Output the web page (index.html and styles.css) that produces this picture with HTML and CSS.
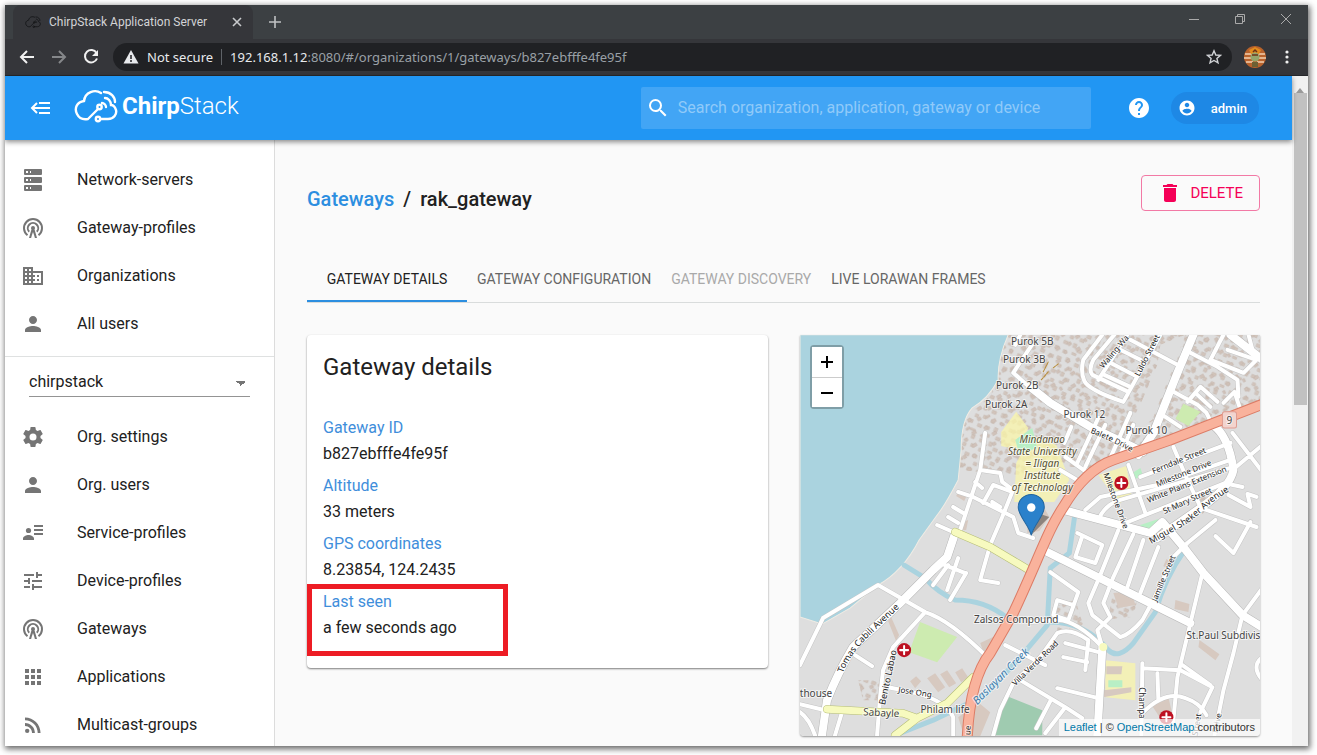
FILE: index.html
```html
<!DOCTYPE html>
<html lang="en">
<head>
<meta charset="utf-8">
<title>ChirpStack Application Server</title>
<link rel="stylesheet" href="styles.css">
</head>
<body>
<svg class="sprite" aria-hidden="true">
  <symbol id="i-cloud" viewBox="0 0 44 34"><g fill="none" stroke="currentColor" stroke-width="2.4" stroke-linecap="round"><path d="M27 4C21 0 11 3 10 12C3 13 0 19 3 25C5 29 9 31 14 30L24 20"/><circle cx="25.500" cy="18" r="2.200"/><circle cx="24" cy="30" r="2.200"/><path d="M26.500 30H34C40 30 43 25 42 21C41 18 39 16 37 16C37 12 34 9 31 9M28 14C30 14 32 16 32 18M30 3C37 3 41 8 41 13"/></g></symbol>
  <symbol id="i-server" viewBox="0 0 24 24"><path fill-rule="evenodd" d="M4 1H20A1 1 0 0 1 21 2V6A1 1 0 0 1 20 7H4A1 1 0 0 1 3 6V2A1 1 0 0 1 4 1M4 9H20A1 1 0 0 1 21 10V14A1 1 0 0 1 20 15H4A1 1 0 0 1 3 14V10A1 1 0 0 1 4 9M4 17H20A1 1 0 0 1 21 18V22A1 1 0 0 1 20 23H4A1 1 0 0 1 3 22V18A1 1 0 0 1 4 17M9 5H10V3H9V5M9 13H10V11H9V13M9 21H10V19H9V21M5 3V5H7V3H5M5 11V13H7V11H5M5 19V21H7V19H5Z"/></symbol>
  <symbol id="i-radio" viewBox="0 0 24 24"><path d="M12 10a2 2 0 0 0-2 2c0 .5.200 1 .5 1.300L8 22h2.100l.7-2.500L12 16l1.200 3.500.7 2.500H16l-2.500-8.700c.3-.3.5-.8.5-1.300a2 2 0 0 0-2-2z"/><g fill="none" stroke="currentColor" stroke-width="2"><path d="M6.500 19.200A9 9 0 1 1 17.500 19.200M8.200 15.800A5.200 5.200 0 1 1 15.800 15.800"/></g></symbol>
  <symbol id="i-building" viewBox="0 0 24 24"><path d="M12 7V3H2v18h20V7H12zM6 19H4v-2h2v2zm0-4H4v-2h2v2zm0-4H4V9h2v2zm0-4H4V5h2v2zm4 12H8v-2h2v2zm0-4H8v-2h2v2zm0-4H8V9h2v2zm0-4H8V5h2v2zm10 12h-8v-2h2v-2h-2v-2h2v-2h-2V9h8v10zm-2-8h-2v2h2v-2zm0 4h-2v2h2v-2z"/></symbol>
  <symbol id="i-person" viewBox="0 0 24 24"><path d="M12 12c2.210 0 4-1.790 4-4s-1.790-4-4-4-4 1.790-4 4 1.790 4 4 4zm0 2c-2.670 0-8 1.340-8 4v2h16v-2c0-2.660-5.330-4-8-4z"/></symbol>
  <symbol id="i-gear" viewBox="0 0 24 24"><path d="M12 15.500A3.500 3.500 0 0 1 8.500 12 3.500 3.500 0 0 1 12 8.500a3.500 3.500 0 0 1 3.500 3.500 3.500 3.500 0 0 1-3.500 3.500m7.430-2.530c.04-.32.07-.64.07-.97s-.03-.66-.07-1l2.110-1.630c.19-.15.24-.42.120-.64l-2-3.460c-.12-.22-.39-.31-.61-.22l-2.490 1c-.52-.39-1.060-.73-1.690-.98l-.37-2.650A.506.506 0 0 0 14 2h-4c-.25 0-.46.18-.5.420l-.37 2.650c-.63.250-1.170.590-1.690.980l-2.490-1c-.22-.09-.49 0-.61.220l-2 3.460c-.13.220-.07.490.120.640L4.570 11c-.04.340-.07.670-.07 1s.03.650.070.970l-2.110 1.660c-.19.150-.25.420-.12.640l2 3.460c.12.220.390.300.610.220l2.490-1.010c.52.400 1.060.740 1.690.990l.37 2.650c.04.240.250.420.5.420h4c.25 0 .46-.18.5-.42l.37-2.650c.63-.26 1.170-.59 1.690-.99l2.490 1.010c.22.080.490 0 .610-.22l2-3.460c.12-.22.07-.49-.12-.64l-2.110-1.660z"/></symbol>
  <symbol id="i-detail" viewBox="0 0 24 24"><circle cx="7.500" cy="9.500" r="2.600"/><path d="M2 19v-1.500c0-2.300 3.500-3.500 5.500-3.500s5.500 1.200 5.500 3.500V19zM13 4h9v2h-9zM13 8h9v2h-9zM13 12h9v2h-9z"/></symbol>
  <symbol id="i-tune" viewBox="0 0 24 24"><path d="M3 17v2h6v-2H3zM3 5v2h10V5H3zm10 16v-2h8v-2h-8v-2h-2v6h2zM7 9v2H3v2h4v2h2V9H7zm14 4v-2H11v2h10zm-6-4h2V7h4V5h-4V3h-2v6z"/></symbol>
  <symbol id="i-apps" viewBox="0 0 24 24"><path d="M4 8h4V4H4v4zm6 12h4v-4h-4v4zm-6 0h4v-4H4v4zm0-6h4v-4H4v4zm6 0h4v-4h-4v4zm6-10v4h4V4h-4zm-6 4h4V4h-4v4zm6 6h4v-4h-4v4zm0 6h4v-4h-4v4z"/></symbol>
  <symbol id="i-rss" viewBox="0 0 24 24"><circle cx="6.180" cy="17.820" r="2.180"/><path d="M4 4.440v2.830c7.030 0 12.730 5.700 12.730 12.730h2.830C19.560 11.410 12.590 4.440 4 4.440zm0 5.660v2.830c3.900 0 7.070 3.170 7.070 7.070h2.830c0-5.470-4.430-9.900-9.900-9.900z"/></symbol>
</svg>

<div class="window">
  <div class="tabstrip">
    <div class="browser-tab">
      <svg class="favicon"><use href="#i-cloud"/></svg>
      <span class="tab-title">ChirpStack Application Server</span>
      <button class="chrome-btn" aria-label="Close tab"><svg width="16" height="16" viewBox="0 0 16 16"><path d="M4 4l8 8M12 4l-8 8" stroke="#c8cacc" stroke-width="1.600"/></svg></button>
    </div>
    <button class="chrome-btn new-tab" aria-label="New tab"><svg width="16" height="16" viewBox="0 0 16 16"><path d="M2 8h12M8 2v12" stroke="#bfc1c3" stroke-width="1.600"/></svg></button>
    <div class="win-controls">
      <button class="chrome-btn" aria-label="Minimize"><svg width="12" height="12" viewBox="0 0 12 12"><path d="M1 6.500h10" stroke="#aaa"/></svg></button>
      <button class="chrome-btn" aria-label="Restore"><svg width="12" height="12" viewBox="0 0 12 12"><path d="M1.500 3.500h7v7h-7zM3.500 3.500v-2h7v7h-2" fill="none" stroke="#aaa"/></svg></button>
      <button class="chrome-btn" aria-label="Close window"><svg width="12" height="12" viewBox="0 0 12 12"><path d="M1 1l10 10M11 1L1 11" stroke="#aaa"/></svg></button>
    </div>
  </div>

  <div class="toolbar">
    <button class="chrome-btn" aria-label="Back"><svg width="20" height="20" viewBox="0 0 20 20"><path d="M17 10H4M10 4l-6 6 6 6" fill="none" stroke="#f1f1f1" stroke-width="2"/></svg></button>
    <button class="chrome-btn" aria-label="Forward"><svg width="20" height="20" viewBox="0 0 20 20"><path d="M3 10h13M10 4l6 6-6 6" fill="none" stroke="#85878a" stroke-width="2"/></svg></button>
    <button class="chrome-btn" aria-label="Reload"><svg width="20" height="20" viewBox="0 0 20 20"><path d="M15.500 6A6.200 6.200 0 1 0 16 11.500" fill="none" stroke="#f1f1f1" stroke-width="2"/><path d="M17 3v6h-6z" fill="#f1f1f1"/></svg></button>
    <div class="omnibox">
      <svg width="16" height="16" viewBox="0 0 16 16"><path d="M8 1l7.500 13.500H.5z" fill="#e8eaed"/><path d="M8 6v4M8 11v2" stroke="#202124" stroke-width="1.500"/></svg>
      <span class="secure">Not secure</span>
      <span class="url"><b>192.168.1.12</b>:8080/#/organizations/1/gateways/b827ebfffe4fe95f</span>
      <svg width="16" height="16" viewBox="0 0 16 16"><path d="M8 1.800l1.800 4.200 4.600.4-3.500 3 1.100 4.500L8 11.500l-4 2.400 1.100-4.500-3.500-3 4.600-.4z" fill="none" stroke="#d0d2d5" stroke-width="1.400"/></svg>
    </div>
    <svg class="avatar" viewBox="0 0 22 22"><circle cx="11" cy="11" r="11" fill="#b8622c"/><path d="M1 8h7M0 12h8M2 16h7M14 8h7M14 12h8M13 16h7" stroke="#f2cfae" stroke-width="1.600"/><path d="M5 4l6-3 6 3-2 4H7z" fill="#e38b1d"/><circle cx="11" cy="11" r="4.500" fill="#95a56b"/><path d="M8 9h6M9 6l2-2 2 2" stroke="#6b321a" stroke-width="1.500" fill="none"/><path d="M8 16h6v5H8z" fill="#6d6033"/></svg>
    <button class="chrome-btn" aria-label="Menu"><svg width="6" height="16" viewBox="0 0 6 16" fill="#f1f1f1"><circle cx="3" cy="3" r="1.600"/><circle cx="3" cy="8" r="1.600"/><circle cx="3" cy="13" r="1.600"/></svg></button>
  </div>

  <div class="viewport">
    <div class="app">
      <header class="appbar">
        <button class="bare" aria-label="Toggle menu"><svg width="22" height="16" viewBox="0 0 22 16"><path d="M10 3h11M3 8h18M10 13h11M8 3L3 8l5 5" fill="none" stroke="#fff" stroke-width="2"/></svg></button>
        <a class="logo" href="#/" aria-label="ChirpStack"><svg width="44" height="34"><use href="#i-cloud"/></svg><span><b>Chirp</b>Stack</span></a>
        <label class="search">
          <svg width="24" height="24" viewBox="0 0 24 24"><path fill="#fff" d="M15.500 14h-.79l-.28-.27A6.471 6.471 0 0 0 16 9.500 6.500 6.500 0 1 0 9.500 16c1.610 0 3.090-.59 4.230-1.570l.27.280v.790l5 4.990L20.490 19l-4.990-5zm-6 0C7.010 14 5 11.990 5 9.500S7.010 5 9.500 5 14 7.010 14 9.500 11.990 14 9.500 14z"/></svg>
          <input type="text" aria-label="Search" placeholder="Search organization, application, gateway or device">
        </label>
        <a class="help" href="#/help" aria-label="Help"><svg width="24" height="24" viewBox="0 0 24 24"><path fill="#fff" d="M12 2C6.480 2 2 6.480 2 12s4.480 10 10 10 10-4.480 10-10S17.520 2 12 2zm1 17h-2v-2h2v2zm2.070-7.750l-.9.920C13.450 12.900 13 13.500 13 15h-2v-.5c0-1.100.450-2.100 1.170-2.830l1.240-1.260c.37-.36.590-.86.590-1.410 0-1.100-.9-2-2-2s-2 .9-2 2H8c0-2.210 1.790-4 4-4s4 1.790 4 4c0 .88-.36 1.680-.93 2.250z"/></svg></a>
        <button class="user"><svg width="18" height="18" viewBox="0 0 24 24"><path fill="#fff" d="M12 2C6.480 2 2 6.480 2 12s4.480 10 10 10 10-4.480 10-10S17.520 2 12 2zm0 3c1.660 0 3 1.340 3 3s-1.340 3-3 3-3-1.340-3-3 1.340-3 3-3zm0 14.200c-2.500 0-4.710-1.280-6-3.220.03-1.990 4-3.080 6-3.080 1.990 0 5.970 1.090 6 3.080-1.290 1.940-3.500 3.220-6 3.220z"/></svg>admin</button>
      </header>

      <div class="body">
        <nav class="sidebar">
          <div class="nav-group top">
            <a href="#/network-servers"><svg><use href="#i-server"/></svg>Network-servers</a>
            <a href="#/gateway-profiles"><svg><use href="#i-radio"/></svg>Gateway-profiles</a>
            <a href="#/organizations"><svg><use href="#i-building"/></svg>Organizations</a>
            <a href="#/users"><svg><use href="#i-person"/></svg>All users</a>
          </div>
          <div class="org"><select aria-label="Organization"><option>chirpstack</option></select></div>
          <div class="nav-group">
            <a href="#/settings"><svg><use href="#i-gear"/></svg>Org. settings</a>
            <a href="#/org-users"><svg><use href="#i-person"/></svg>Org. users</a>
            <a href="#/service-profiles"><svg><use href="#i-detail"/></svg>Service-profiles</a>
            <a href="#/device-profiles"><svg><use href="#i-tune"/></svg>Device-profiles</a>
            <a href="#/gateways"><svg><use href="#i-radio"/></svg>Gateways</a>
            <a href="#/applications"><svg><use href="#i-apps"/></svg>Applications</a>
            <a href="#/multicast-groups"><svg><use href="#i-rss"/></svg>Multicast-groups</a>
          </div>
        </nav>

        <main>
          <div class="title-row">
            <h1><a href="#/gateways">Gateways</a><span>/</span>rak_gateway</h1>
            <button class="delete"><svg width="24" height="24" viewBox="0 0 24 24"><path fill="currentColor" d="M6 19c0 1.100.9 2 2 2h8c1.100 0 2-.9 2-2V7H6v12zM19 4h-3.500l-1-1h-5l-1 1H5v2h14V4z"/></svg>DELETE</button>
          </div>
          <div class="tabs" role="tablist">
            <button role="tab" aria-selected="true" class="active">GATEWAY DETAILS</button>
            <button role="tab">GATEWAY CONFIGURATION</button>
            <button role="tab" disabled>GATEWAY DISCOVERY</button>
            <button role="tab">LIVE LORAWAN FRAMES</button>
          </div>
          <div class="grid">
            <section class="card">
              <h2>Gateway details</h2>
              <dl>
                <div><dt>Gateway ID</dt><dd>b827ebfffe4fe95f</dd></div>
                <div><dt>Altitude</dt><dd>33 meters</dd></div>
                <div><dt>GPS coordinates</dt><dd>8.23854, 124.2435</dd></div>
                <div class="marked"><dt>Last seen</dt><dd>a few seconds ago</dd></div>
              </dl>
            </section>
            <section class="map">
              <svg class="tiles" viewBox="800 335 460 401" preserveAspectRatio="xMidYMid slice">
                <defs>
                  <pattern id="houses" width="37" height="31" patternUnits="userSpaceOnUse" patternTransform="rotate(24)"><path d="M1 2h4v3H1zM11 1h3v4h-3zM17 5h4v3h-4zM29 1h3v4h-3zM4 11h3v3H4zM13 10h4v2h-4zM24 12h3v3h-3zM32 10h3v3h-3zM1 19h4v3H1zM10 17h3v4h-3zM20 19h4v3h-4zM30 20h4v3h-4zM5 26h3v3H5zM15 25h4v3h-4zM25 27h5v2h-5z" fill="#d2c5bc" stroke="#c3b3a9" stroke-width=".5"/></pattern>
                  <pattern id="sheds" width="23" height="29" patternUnits="userSpaceOnUse" patternTransform="rotate(-31)"><path d="M2 3h3v3H2zM12 1h4v3h-4zM18 8h2v3h-2zM6 12h4v3H6zM15 17h3v3h-3zM1 21h3v3H1zM9 24h4v2H9z" fill="#d0c2b9" stroke="#c0b0a6" stroke-width=".5"/></pattern>
                  <path id="built" d="M1006 335h254v72l-110 42-50 20-62-5-17 11-63-5 5-50 28-25zM1050 608l25-8 8 25-25 8zM1113 590l25 5-5 22-25 2zM858 680h25v20h-20zM1196 500l12-8 6 10-12 12z"/>
                  <g id="minor">
                    <path d="M985 433L980 470L960 530L955 533M980 470L1000 473L1002 482L1010 488M958 492L973 497L1013 517L1018 533L1033 538M975 482L982 488M983 503L993 485L1012 492L1002 517L990 545L980 580L998 583M992 502L1000 507M953 507L963 513M948 517L958 523M937 525L953 532"/>
                    <path d="M1033 343L1013 373L1040 397M1020 335L1015 345M1102 335L1083 360Q1080 372 1084 381T1123 402L1160 335M1114 335L1093 360Q1088 370 1092 375L1128 392M1127 335L1098 380M1130 340L1177 365M1120 350L1140 360M1110 363L1135 376M1104 375L1130 387"/>
                    <path d="M1190 353L1217 367L1237 380L1238 397M1173 392L1197 405L1206 413L1212 425M1187 402L1200 387L1217 402M1195 393L1210 407M1162 415L1180 427M1223 335L1210 360L1243 373L1256 360L1227 350M1248 335L1252 350M1223 403L1234 392L1240 410"/>
                    <path d="M1077 463L1098 418M1085 467L1105 425M1110 458L1130 413M1064 443L1071 427M1120 455L1133 425M1065 457L1090 475M1060 470L1082 483"/>
                    <path d="M1128 465L1145 513M1173 447L1187 480L1200 507M1140 477L1230 443M1085 510L1100 497L1157 485L1230 460M1098 520Q1104 505 1120 500L1230 468M1120 525L1150 513L1230 481M1232 433L1262 472M1262 445L1232 470M1228 495L1250 507L1247 494L1256 497M1200 508L1256 527M1228 484L1242 487"/>
                    <path d="M1118 530L1100 575L1088 603L1092 615L1120 637Q1130 634 1142 620L1153 600L1173 557L1187 543L1215 520M1133 534L1113 577L1103 603L1110 617L1097 630L1102 647M1143 540L1127 587M1158 547L1140 593M1050 572L1078 592L1068 620L1053 615L1057 600L1073 605M1077 533L1102 545L1095 563L1075 557L1082 536M1215 536L1233 553L1250 522"/>
                    <path d="M1202 573L1190 623L1177 677L1172 730M1242 615L1233 653L1223 690L1214 735M1262 588L1242 615M1030 622L1058 620Q1077 621 1102 647M993 735L1000 710L1013 683L1040 657L1057 633Q1070 627 1088 640L1085 670M1065 643L1102 653M1063 657L1087 662M1057 688L1098 698M1020 680L1065 707L1082 718M1045 733L1065 707M1036 728L1051 699"/>
                    <path d="M1142 663L1141 735M1142 668L1180 670L1212 687L1200 712M1157 673L1158 700M1143 712Q1165 690 1185 698Q1200 703 1206 715M1262 657Q1250 666 1262 680M1182 665L1210 685"/>
                    <path d="M800 665L823 618L878 585L925 612Q950 620 987 657M925 612L893 647L883 670L880 697L877 735M888 687L917 693Q947 702 953 717V735M800 704L825 710M815 735Q809 718 800 712M855 655L872 666M842 712L835 735M958 558L947 590M933 585L948 565M966 573L950 600M940 563L965 573M1005 645L1045 665"/>
                  </g>
                  <g id="main"><path d="M1030 387L1050 403L1090 427L1143 452M1193 335L1177 373L1153 433L1138 455M1230 335L1262 360M1212 425Q1228 435 1233 470Q1230 487 1200 508L1157 538M1047 552L1190 623M1063 510L1150 533L1162 522L1183 547L1203 573L1242 615L1263 628M1102 647L1097 735M955 533L947 557L933 570L900 603L853 647Q838 672 827 700L822 735"/></g>
                  <path id="highway" d="M1263 404L1170 440L1113 460Q1085 470 1063 507C1047 531 1038 560 1013 613L990 653Q970 678 967 738"/>
                  <path id="yellow" d="M955 532L990 547L1017 563L1032 572M827 709L903 713L917 718L895 735M917 718L947 703L973 677"/>
                  <path id="p-tomas" d="M843 673Q850 654 868 637L903 604"/>
                  <path id="p-miguel" d="M1151 544L1188 523L1215 500L1233 488"/>
                  <path id="p-balete" d="M1090 433Q1112 441 1140 457"/>
                </defs>
                <path class="land" d="M800 335h460v401H800z"/>
                <use href="#built" fill="url(#houses)"/><use href="#built" fill="url(#sheds)"/>
                <path d="M1160 345l25-10-33 85-25 15 30-70z" fill="#dedede"/>
                <path fill="#faf5a9" opacity=".75" d="M1016 463l15-28 25 10 13 35-15 22-40 0zM1001 432l15-20 12 16-10 22-17-4zM1098 475l28-9 5 28-12 10zM1105 660l30 3v37l-30-3z"/>
                <path fill="#b8efc5" d="M1015 440l17-12 5 20-18 6zM1132 473l8-5 3 9-10 2zM1140 525l18-6-6 15-12 1zM1108 680h14v7h-14z"/>
                <path fill="#cdebb0" d="M920 622l37 15-20 25-28-10zM1183 404l17 8-12 14-13-7z"/>
                <path fill="#9fcbb0" d="M1007 696l35 14v25h-50z"/>
                <path fill="#d7c9c0" d="M958 717l20-15 12 10-10 24h-16zM980 643l15-7 3 12-14 6zM910 681l6-5 5 5-6 7zM1175 600l14 4-1 8-14-3zM1166 559l7 5-2 7-8-5zM1199 640l20 14-4 6-17-13zM1106 666l16 0-1 8h-15zM1103 690l28-3v5l-28 5zM1152 706l16-9 4 17-12 4zM891 617l8 18-3 6-8-20zM1113 593l18-2 4 14-17 3zM958 492l8 5-2 4-8-5zM962 522l6-2-2 10-5 0zM1028 512l16-4 5 9-10 14-12 2zM927 678l8-5 10 14-7 5zM940 674l7-4 9 13-7 4zM955 672l7-4 6 9-7 5z"/>
                <path class="water" d="M800 335H1008Q997 360 998 380Q988 399 972 408Q961 420 961 450L958 480Q945 505 937 515L919 540Q903 571 878 585L850 608L822 624L800 617z"/>
                <path class="creek" d="M904 565L925 578Q937 592 955 600Q985 600 1007 618M1075 512L1069 553L1050 568L1047 625L1020 657L985 695L933 720L895 735M1183 552Q1165 577 1155 612L1133 643Q1118 660 1108 650Q1085 622 1050 622"/>
                <use href="#minor" class="casing-minor"/><use href="#main" class="casing-main"/>
                <use href="#minor" class="road-minor"/><use href="#main" class="road-main"/>
                <use href="#yellow" class="casing-yellow"/><use href="#yellow" class="road-yellow"/>
                <use href="#highway" class="casing-highway"/><use href="#highway" class="road-highway"/>
                <circle cx="1103" cy="647" r="4" fill="#f7fabf"/>
                <path d="M1041 380l7-8M1043 372l5-10M1053 368l5-4" stroke="#b78c38" stroke-dasharray="3 1"/>
                <rect x="1222" y="412" width="14" height="16" rx="2" fill="#f2d4ce" stroke="#df9c91"/>
                <g class="place">
                  <text x="1229" y="424">9</text>
                  <text x="1032" y="345">Purok 5B</text><text x="1024" y="363">Purok 3B</text><text x="1017" y="389">Purok 2B</text><text x="1006" y="408">Purok 2A</text>
                  <text x="1084" y="418">Purok 12</text><text x="1146" y="434">Purok 10</text><text x="1016" y="623">Zalsos Compound</text>
                  <text x="1223" y="639">St.Paul Subdivis</text><text x="816" y="697">thouse</text><text x="945" y="713">Philam life</text><text x="881" y="716" transform="rotate(3 881 716)">Sabayle</text>
                </g>
                <g class="campus"><text x="1042" y="443">Mindanao</text><text x="1042" y="455">State University</text><text x="1042" y="467">= Iligan</text><text x="1042" y="479">Institute</text><text x="1042" y="491">of Technology</text></g>
                <g class="street">
                  <text class="big"><textPath href="#p-tomas">Tomas Cabili Avenue</textPath></text>
                  <text class="big"><textPath href="#p-miguel">Miguel Sheker Avenue</textPath></text>
                  <text><textPath href="#p-balete">Balete Drive</textPath></text>
                  <text transform="translate(1153 474) rotate(-22)">Ferndale Street</text>
                  <text transform="translate(1157 487) rotate(-22)">Milestone Drive</text>
                  <text transform="translate(1148 503) rotate(-22)">White Plains Extension</text>
                  <text transform="translate(1164 514) rotate(-24)">St Mary Street</text>
                  <text transform="translate(1103 474) rotate(70)">Milestone Drive</text>
                  <text transform="translate(1103 369) rotate(-50)">Waling-Wa</text>
                  <text transform="translate(1139 377) rotate(-63)">Luldo Street</text>
                  <text transform="translate(1156 602) rotate(-67)">Jamille Street</text>
                  <text transform="translate(1015 686) rotate(-44)">Villa Verde Road</text>
                  <text class="big" transform="translate(885 705) rotate(-78)">Benito Labao</text>
                  <text transform="translate(898 692) rotate(9)">Jose Ong</text>
                  <text transform="translate(1139 687) rotate(90)">Champa</text>
                  <text transform="translate(1217 733) rotate(-78)">Drive</text>
                  <text transform="translate(1197 736) rotate(-80)">Street</text>
                  <text transform="translate(970 735) rotate(-86)">ue</text>
                </g>
                <text class="creek-name" transform="translate(977 705) rotate(-45)">Baslayan Creek</text>
                <g fill="#bd1122"><circle cx="1121" cy="483" r="7"/><circle cx="904" cy="650" r="7"/><circle cx="1166" cy="717" r="7"/></g>
                <path d="M1117 483h8M1121 479v8M900 650h8M904 646v8M1162 717h8M1166 713v8" stroke="#fff" stroke-width="2"/>
                <path d="M1031 535L1049 517L1040 514z" opacity=".35"/>
                <path d="M1031 535C1028 524 1018 516 1018 507A13 12.500 0 0 1 1044 507C1044 516 1034 524 1031 535z" fill="#2a81cb" stroke="#21659f"/>
                <circle cx="1031" cy="507.500" r="4.200" fill="#fff"/>
              </svg>
              <div class="zoom-ctl"><button aria-label="Zoom in"><svg width="14" height="14" viewBox="0 0 14 14"><path d="M1 7h12M7 1v12" stroke="#000" stroke-width="2"/></svg></button><button aria-label="Zoom out"><svg width="14" height="14" viewBox="0 0 14 14"><path d="M1 7h12" stroke="#000" stroke-width="2"/></svg></button></div>
              <div class="attribution"><a href="#leaflet">Leaflet</a> | © <a href="#osm">OpenStreetMap</a> contributors</div>
            </section>
          </div>
        </main>
      </div>
    </div>
    <div class="scrollbar"><span class="arrow"></span><span class="thumb"></span></div>
  </div>
</div>
</body>
</html>
```
FILE: styles.css
```css
*, *::after { box-sizing: border-box; }
body { margin: 0; height: 100vh; padding: 5px 9px 9px 5px; overflow: hidden; background: #fff; font: 16px/24px Roboto, sans-serif; color: #212121; }
button { font-family: inherit; cursor: pointer; }
a { color: #2c8ee0; text-decoration: none; }
.sprite { position: absolute; width: 0; height: 0; }

.window { height: 100%; display: flex; flex-direction: column; box-shadow: 1px 2px 6px 1px rgba(0,0,0,.6); overflow: hidden; }
.chrome-btn, .bare { border: 0; padding: 0; background: none; display: flex; }
.tabstrip { flex: none; height: 34px; display: flex; align-items: center; background: #3c4043; }
.browser-tab { align-self: stretch; margin-left: 8px; width: 240px; padding: 0 8px 0 12px; display: flex; align-items: center; gap: 8px; background: #35363a; border-radius: 8px 8px 0 0; color: #d3d4d6; font-size: 12px; }
.favicon { width: 16px; height: 14px; color: #151618; }
.tab-title { flex: 1; white-space: nowrap; }
.new-tab { margin-left: 14px; }
.win-controls { margin-left: auto; display: flex; gap: 34px; padding: 0 16px 6px 0; }
.toolbar { flex: none; height: 37px; display: flex; align-items: center; gap: 12px; padding: 0 18px 0 12px; background: #35363a; border-bottom: 1px solid #27282b; }
.omnibox { flex: 1; height: 28px; border-radius: 14px; background: #202124; display: flex; align-items: center; padding: 0 10px; gap: 8px; color: #e8eaed; font-family: "Noto Sans", sans-serif; font-size: 13px; white-space: nowrap; }
.secure { padding-right: 8px; border-right: 1px solid #5f6368; line-height: 16px; }
.url { flex: 1; color: #9aa0a6; }
.url b { font-weight: 400; color: #e8eaed; }
.avatar { width: 22px; height: 22px; margin-right: 6px; }

.viewport { flex: 1; min-height: 0; display: flex; background: #f1f1f1; }
.app { flex: 1; min-width: 0; display: flex; flex-direction: column; background: #fafafa; }
.appbar { position: relative; z-index: 1; flex: none; height: 64px; display: flex; align-items: center; padding: 0 33px 0 24px; background: #2196f3; box-shadow: 0 2px 5px rgba(0,0,0,.45); }
.logo { margin: 0 auto 4px 23px; display: flex; align-items: center; gap: 4px; color: #fff; font-size: 24px; font-weight: 300; }
.logo b { font-weight: 700; }
.search { width: 450px; height: 42px; display: flex; align-items: center; gap: 8px; padding: 0 5px; border-radius: 2px; background: #42a5f5; }
.search input { flex: 1; min-width: 0; border: 0; outline: 0; background: none; color: #fff; font: 16px/24px Roboto, sans-serif; padding: 0; }
.search input::placeholder { color: #90caf9; opacity: 1; }
.help { margin: 0 20px 0 36px; display: flex; }
.user { height: 32px; border: 0; border-radius: 16px; padding: 0 12px 0 7px; display: flex; align-items: center; gap: 15px; background: #1e88e5; color: #fff; font-size: 13px; font-weight: 500; }

.body { flex: 1; min-height: 0; display: flex; overflow: hidden; }
.sidebar { flex: none; width: 270px; background: #fff; border-right: 1px solid #dcdcdc; }
.nav-group a { height: 48px; padding-left: 16px; display: flex; align-items: center; gap: 32px; color: #212121; }
.nav-group svg { flex: none; width: 24px; height: 24px; fill: currentColor; color: #757575; }
.top { padding: 16px 0 8px; border-bottom: 1px solid #dfe1e1; }
.org { padding: 10px 24px 16px; }
.org select { display: block; width: 100%; height: 30px; border: 0; border-bottom: 1px solid #949494; border-radius: 0; outline: 0; padding: 0; appearance: none; font: 16px/24px Roboto, sans-serif; color: #212121; background: linear-gradient(to bottom right, #757575 50%, transparent 50%) right 4px top 14px / 5px 5px no-repeat, linear-gradient(to bottom left, #757575 50%, transparent 50%) right 9px top 14px / 5px 5px no-repeat; }

main { flex: 1; min-width: 0; padding: 35px 32px 10px; }
.title-row { display: flex; justify-content: space-between; align-items: flex-start; padding-bottom: 44px; }
h1 { margin: 12px 0 0; font-size: 20px; line-height: 24px; font-weight: 500; }
h1 span { margin: 0 9px; }
.delete { height: 36px; padding: 0 16px; display: flex; align-items: center; gap: 8px; border: 1px solid #f279a5; border-radius: 4px; background: none; color: #f50057; font-size: 15px; font-weight: 400; }
.tabs { display: flex; border-bottom: 1px solid #d9dcdc; }
.tabs button { height: 47px; padding: 0 10px; border: 0; background: none; font-size: 14px; font-weight: 400; color: #666; white-space: nowrap; }
.tabs .active { min-width: 160px; color: #212121; box-shadow: inset 0 -2px #2c8ee0; }
.tabs button:disabled { color: #a9a9a9; }
.grid { display: grid; grid-template-columns: 1fr 1fr; gap: 32px; align-items: start; padding-top: 32px; }
.card { border-radius: 4px; background: #fff; box-shadow: 0 1px 2px rgba(0,0,0,.5); padding: 16px 16px 27px; }
h2 { margin: 0 0 32px; font-size: 24px; line-height: 32px; font-weight: 400; }
dl { margin: 0; display: grid; gap: 6px; line-height: 26px; }
dt { color: #3f8edb; }
dd { margin: 0; }
.marked { position: relative; }
.marked::after { content: ""; position: absolute; left: -16px; top: -5px; width: 201px; height: 72px; border: 5px solid #ed1c24; }

.map { position: relative; overflow: hidden; border-radius: 0 0 4px 4px; box-shadow: 0 1px 2px rgba(0,0,0,.4); }
.tiles { display: block; width: 100%; height: 401px; font-family: "Noto Sans", sans-serif; stroke-linejoin: round; stroke-linecap: round; }
.land { fill: #dedede; }
.water { fill: #aad3df; stroke: #f0ece4; stroke-width: 1; }
.creek { fill: none; stroke: #aad3df; stroke-width: 5; }
.casing-minor { fill: none; stroke: #c4c4c4; stroke-width: 5; }
.road-minor { fill: none; stroke: #fff; stroke-width: 4; }
.casing-main { fill: none; stroke: #b6b6b6; stroke-width: 9; }
.road-main { fill: none; stroke: #fff; stroke-width: 8; }
.casing-yellow { fill: none; stroke: #b5bd75; stroke-width: 8; }
.road-yellow { fill: none; stroke: #f7fabf; stroke-width: 7; }
.casing-highway { fill: none; stroke: #dc7c66; stroke-width: 11; }
.road-highway { fill: none; stroke: #f9b29c; stroke-width: 9; }
.tiles text { stroke: rgba(255,255,255,.65); stroke-width: 2px; paint-order: stroke; fill: #222; font-size: 8px; }
.tiles .place text { font-size: 10px; text-anchor: middle; fill: #444; }
.tiles .campus text { font-size: 10px; font-style: italic; text-anchor: middle; fill: #555032; }
.tiles .big { font-size: 9px; }
.tiles .creek-name { fill: #4580ad; font-size: 11px; font-style: italic; }
.zoom-ctl { position: absolute; left: 10px; top: 10px; border: 2px solid rgba(0,0,0,.25); border-radius: 4px; background-clip: padding-box; }
.zoom-ctl button { width: 30px; height: 30px; display: flex; align-items: center; justify-content: center; border: 0; padding: 0; background: #fff; }
.zoom-ctl button + button { border-top: 1px solid #ccc; }
.attribution { position: absolute; right: 0; bottom: 0; padding: 0 5px; background: rgba(255,255,255,.7); font: 11px/17px "Liberation Sans", sans-serif; color: #333; }
.attribution a { color: #0078a8; }

.scrollbar { flex: none; width: 16px; display: flex; flex-direction: column; align-items: center; }
.arrow { width: 0; height: 17px; border: 4px solid transparent; border-top-width: 6px; border-bottom: 5px solid #999; background: none; }
.thumb { width: 13px; height: 312px; background: #c1c1c1; }
```
